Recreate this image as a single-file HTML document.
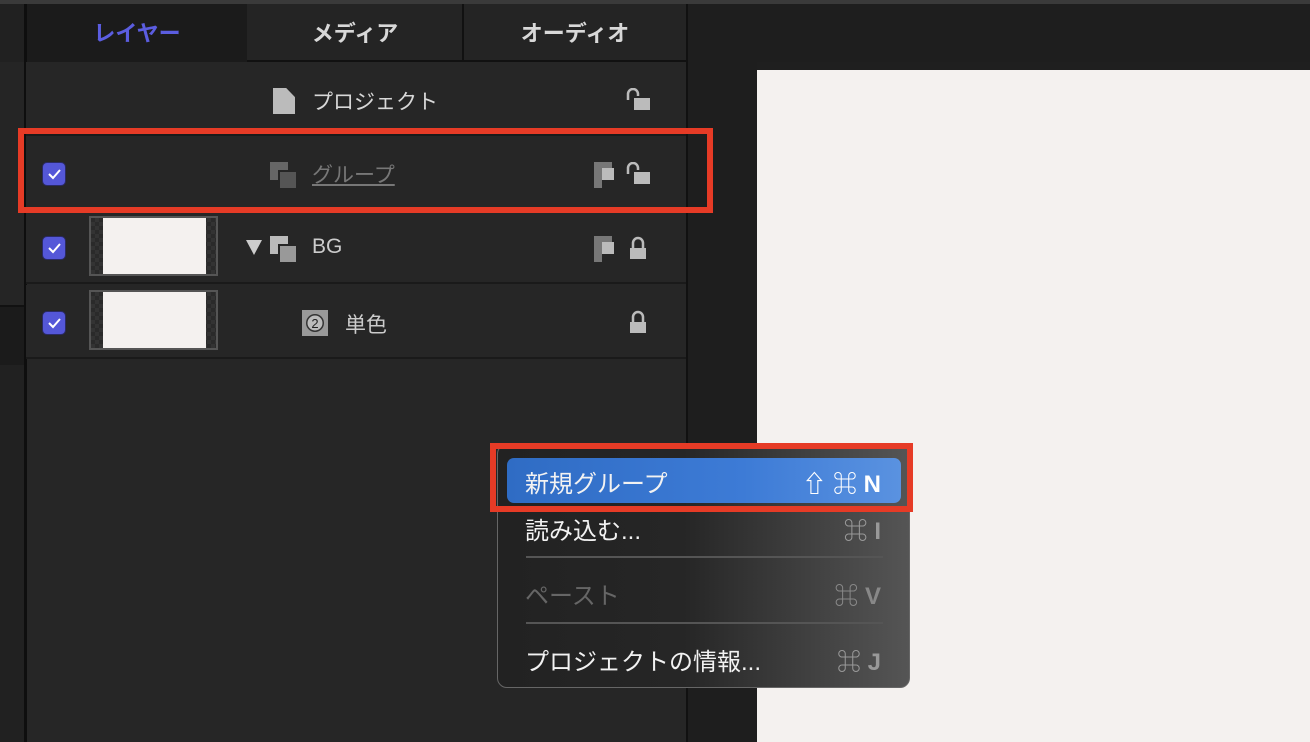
<!DOCTYPE html>
<html><head><meta charset="utf-8"><style>
*{margin:0;padding:0;box-sizing:border-box}
body{width:1310px;height:742px;background:#1f1f1f;position:relative;overflow:hidden;font-family:"Liberation Sans","Noto Sans CJK JP",sans-serif;}
.a{position:absolute}
.t{color:#d8d8d8;font-size:22px;font-weight:bold;}
.cb{position:absolute;left:42px;width:24px;height:24px;border-radius:5px;background:#5457d8;border:1px solid #2a2a66;}
.cb svg{position:absolute;left:4px;top:5px}
.row{position:absolute;left:26px;width:660px;height:74px;border-bottom:2px solid #1a1a1a;background:#262626}
.thumb{position:absolute;left:89px;width:129px;height:60px;border:2px solid #555;background:repeating-conic-gradient(#333 0 25%,#2a2a2a 0 50%) 0 0/8px 8px}
.thumb div{position:absolute;left:12px;top:0;width:103px;height:56px;background:#f4f1ef}
.menu{position:absolute;left:497px;top:444px;width:413px;height:244px;border-radius:10px;border:1px solid #666;background:linear-gradient(90deg,#222 0%,#262626 45%,#555 100%);}
.mi{position:absolute;left:27px;font-size:24px;color:#f2f2f2}
.sc{position:absolute;right:28px;font-size:24px;color:#999;font-weight:bold}
</style></head><body>
<div class="a" style="left:0;top:0;width:25px;height:742px;background:#212121"></div>
<div class="a" style="left:0;top:62px;width:25px;height:244px;background:#252525"></div>
<div class="a" style="left:0;top:305px;width:25px;height:2px;background:#111"></div>
<div class="a" style="left:0;top:307px;width:25px;height:58px;background:#1b1b1b"></div>
<div class="a" style="left:24px;top:0;width:3px;height:742px;background:#0e0e0e"></div>
<div class="a" style="left:0;top:0;width:1310px;height:4px;background:#3a3a3a"></div>
<div class="a" style="left:27px;top:62px;width:659px;height:680px;background:#262626"></div>
<div class="a" style="left:27px;top:4px;width:220px;height:58px;background:#1b1b1b"></div>
<div class="a" style="left:247px;top:4px;width:440px;height:58px;background:#242424;border-bottom:2px solid #111"></div>
<div class="a" style="left:462px;top:4px;width:2px;height:58px;background:#111"></div>
<div class="a" style="left:686px;top:4px;width:2px;height:738px;background:#111"></div>
<div class="a t" style="left:27px;top:16px;width:220px;text-align:center;color:#5b5de0">レイヤー</div>
<div class="a t" style="left:247px;top:16px;width:216px;text-align:center">メディア</div>
<div class="a t" style="left:463px;top:16px;width:224px;text-align:center">オーディオ</div>
<div class="a" style="left:688px;top:4px;width:622px;height:58px;background:#1e1e1e"></div>
<div class="a" style="left:688px;top:62px;width:69px;height:680px;background:#1e1e1e"></div>
<div class="a" style="left:757px;top:70px;width:553px;height:672px;background:#f4f1ef"></div>

<div class="row" style="top:62px"></div>
<div class="a" style="left:273px;top:88px;width:22px;height:26px;background:#bbb;clip-path:polygon(0 0,60% 0,100% 35%,100% 100%,0 100%)"></div>
<div class="a" style="left:312px;top:86px;font-size:21px;color:#d8d8d8">プロジェクト</div>
<svg class="a" style="left:624px;top:88px" width="28" height="24"><path d="M4 12V6a5 5 0 0 1 10 0v2" stroke="#bbb" stroke-width="2.5" fill="none"/><rect x="10" y="10" width="16" height="12" fill="#bbb"/></svg>

<div class="row" style="top:136px"></div>
<div class="cb" style="top:162px"><svg width="15" height="12"><path d="M2 6l4 4 7-8" stroke="#fff" stroke-width="2" fill="none"/></svg></div>
<div class="a" style="left:270px;top:162px;width:18px;height:18px;background:#666"></div>
<div class="a" style="left:278px;top:170px;width:18px;height:18px;background:#555;border-left:2px solid #262626;border-top:2px solid #262626"></div>
<div class="a" style="left:312px;top:159px;font-size:21px;color:#777;text-decoration:underline">グループ</div>
<svg class="a" style="left:594px;top:162px" width="58" height="26"><rect x="0" y="0" width="18" height="6" fill="#777"/><rect x="0" y="6" width="8" height="20" fill="#777"/><rect x="8" y="6" width="12" height="12" fill="#bbb"/><path d="M34 12V6a5 5 0 0 1 10 0v2" stroke="#bbb" stroke-width="2.5" fill="none"/><rect x="40" y="10" width="16" height="12" fill="#bbb"/></svg>

<div class="row" style="top:210px"></div>
<div class="cb" style="top:236px"><svg width="15" height="12"><path d="M2 6l4 4 7-8" stroke="#fff" stroke-width="2" fill="none"/></svg></div>
<div class="thumb" style="top:216px"><div></div></div>
<svg class="a" style="left:246px;top:240px" width="18" height="16"><path d="M0 0h16L8 15z" fill="#ccc"/></svg>
<div class="a" style="left:270px;top:236px;width:18px;height:18px;background:#bbb"></div>
<div class="a" style="left:278px;top:244px;width:18px;height:18px;background:#999;border-left:2px solid #262626;border-top:2px solid #262626"></div>
<div class="a" style="left:312px;top:235px;font-size:21px;color:#ccc">BG</div>
<svg class="a" style="left:594px;top:236px" width="58" height="26"><rect x="0" y="0" width="18" height="6" fill="#777"/><rect x="0" y="6" width="8" height="20" fill="#777"/><rect x="8" y="6" width="12" height="12" fill="#bbb"/><path d="M39 12V7a5 5 0 0 1 10 0v5" stroke="#bbb" stroke-width="2.5" fill="none"/><rect x="36" y="12" width="16" height="11" fill="#bbb"/></svg>

<div class="row" style="top:285px"></div>
<div class="cb" style="top:311px"><svg width="15" height="12"><path d="M2 6l4 4 7-8" stroke="#fff" stroke-width="2" fill="none"/></svg></div>
<div class="thumb" style="top:290px"><div></div></div>
<svg class="a" style="left:302px;top:310px" width="28" height="28"><rect x="0" y="0" width="26" height="26" fill="#999"/><circle cx="13" cy="13" r="9" fill="#333"/><circle cx="13" cy="13" r="7.5" fill="#bbb"/><text x="13" y="18" font-size="13" text-anchor="middle" fill="#222" font-family="Liberation Sans">2</text></svg>
<div class="a" style="left:345px;top:309px;font-size:21px;color:#ccc">単色</div>
<svg class="a" style="left:624px;top:310px" width="28" height="26"><path d="M9 12V7a5 5 0 0 1 10 0v5" stroke="#bbb" stroke-width="2.5" fill="none"/><rect x="6" y="12" width="16" height="11" fill="#bbb"/></svg>

<div class="a" style="left:18px;top:128px;width:695px;height:85px;border:6px solid #e63b26"></div>

<div class="menu">
<div class="a" style="left:9px;top:13px;width:394px;height:45px;border-radius:7px;background:linear-gradient(90deg,#2f6cc4,#3d7bd6 60%,#5a92e0)"></div>
<div class="mi" style="top:19px">新規グループ</div>
<div class="sc" style="top:19px;color:#fff">⇧ ⌘ N</div>
<div class="mi" style="top:66px">読み込む...</div>
<div class="sc" style="top:66px">⌘ I</div>
<div class="a" style="left:28px;top:111px;width:357px;height:2px;background:#555"></div>
<div class="mi" style="top:131px;color:#666">ペースト</div>
<div class="sc" style="top:131px;color:#888">⌘ V</div>
<div class="a" style="left:28px;top:177px;width:357px;height:2px;background:#555"></div>
<div class="mi" style="top:197px">プロジェクトの情報...</div>
<div class="sc" style="top:197px">⌘ J</div>
</div>
<div class="a" style="left:490px;top:443px;width:423px;height:69px;border:6px solid #e63b26"></div>
</body></html>
